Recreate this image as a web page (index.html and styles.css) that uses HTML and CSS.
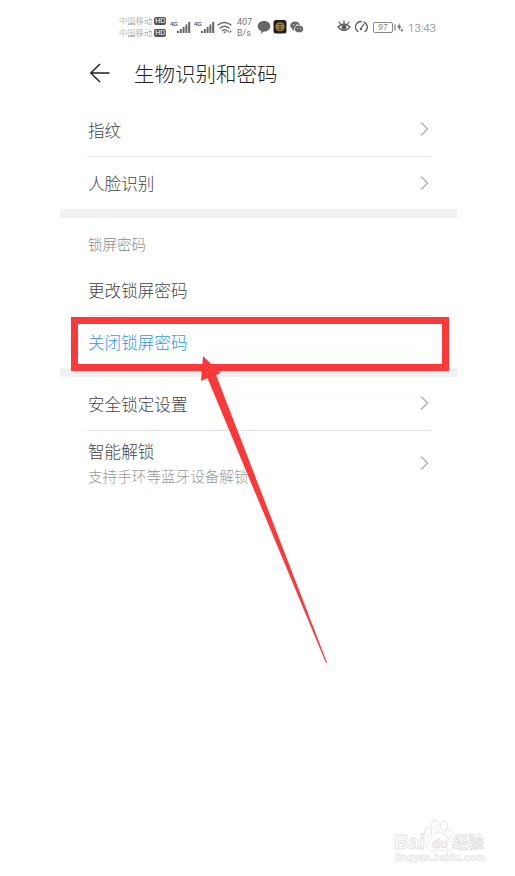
FILE: index.html
```html
<!DOCTYPE html>
<html lang="zh-CN">
<head>
<meta charset="utf-8">
<title>生物识别和密码</title>
<link rel="stylesheet" href="styles.css">
</head>
<body>
<main class="phone">
  <div class="status">
    <div class="carriers">
      <div class="carrier"><span>中国移动</span><b>HD</b></div>
      <div class="carrier"><span>中国移动</span><b>HD</b></div>
    </div>
    <svg class="signals" width="64" height="18" viewBox="0 0 64 18">
      <g fill="#666">
        <path d="M7 15v-2h2v2zM9.800 15v-4h2v4zM12.600 15V9h2v6zM15.400 15V6.500h2V15zM18.200 15V4h2v11z"/>
        <path d="M31 15v-2h2v2zM33.800 15v-4h2v4zM36.600 15V9h2v6zM39.400 15V6.500h2V15zM42.200 15V4h2v11z"/>
      </g>
      <text x="0" y="7.500" class="net">4G</text>
      <text x="24" y="7.500" class="net">4G</text>
      <g fill="none" stroke="#666" stroke-width="1.300" stroke-linecap="round">
        <path d="M48 7q6.500-5 13 0M50 10q4.500-3.500 9 0M52.300 12.500q2.200-1.700 4.400 0"/>
      </g>
      <circle cx="54.500" cy="14.300" r="1" fill="#666"/>
      <path d="M57 13.500l1.700-1.500v3zM61.700 13.500L60 12v3z" fill="#666"/>
    </svg>
    <div class="speed"><span>407</span><span>B/s</span></div>
    <svg class="apps" width="47" height="16" viewBox="0 0 47 16">
      <path d="M7 2c3.800 0 6.300 2.200 6.300 5.200S10.500 12.500 7 12.500L4 14.500l.3-2.600C2 11 .7 9.400 .7 7.200.7 4.200 3.300 2 7 2z" fill="#666"/>
      <rect x="16.500" y="1" width="13" height="13.500" rx="2.500" fill="#251f1b"/>
      <circle cx="23" cy="7.700" r="4.500" fill="#b18a48"/>
      <path d="M20 5.500h6M20 8h6M20.500 10.300h5M23 4v8" stroke="#33271a" fill="none" stroke-width=".6"/>
      <path d="M38 2.500c3 0 5 1.700 5 4s-2 4-5 4l-2.700 1.200.3-1.900C34 9 33.300 8 33.300 6.500c0-2.300 2-4 4.700-4z" fill="#666"/>
      <ellipse cx="42" cy="10" rx="4.500" ry="3.700" fill="#666" stroke="#fff" stroke-width=".7"/>
      <g fill="#fff"><circle cx="36.600" cy="5.500" r=".6"/><circle cx="40" cy="5.500" r=".6"/><circle cx="40.700" cy="9.500" r=".5"/><circle cx="43.500" cy="9.500" r=".5"/></g>
    </svg>
    <svg class="modes" width="33" height="14" viewBox="0 0 33 14">
      <g fill="none" stroke="#5c5c5c" stroke-width="1.200" stroke-linecap="round">
        <path d="M1 7q6-6 12 0q-6 7-12 0zM7 3V1M3.500 4L2 2M10.500 4L12 2"/>
        <path d="M21 11.500C16.500 8.500 18.500 1.500 24.500 1.500M27 2c4 2 4.500 7 1 9.500M23.500 9l3.500-5" stroke-width="1.300"/>
      </g>
      <circle cx="7" cy="7.200" r="2.500" fill="#5c5c5c"/>
      <circle cx="24" cy="9" r="1.200" fill="#5c5c5c"/>
    </svg>
    <div class="battery">97</div>
    <svg class="charge" width="10" height="11" viewBox="0 0 10 11">
      <path d="M1 2.500v6" stroke="#777" stroke-width="1.200"/>
      <path d="M5.500 1L3.200 5.500h2L4.500 9l2.800-4.500H5.500zM7.500 6.500L6.500 8.500h1.200L7.500 10.500l2-2.800H8z" fill="#555"/>
    </svg>
    <div class="time">13:43</div>
  </div>

  <header class="title-bar">
    <svg width="20" height="20" viewBox="0 0 20 20"><path d="M10 1L.8 10L10 19M.8 10H19.500" fill="none" stroke="#222" stroke-width="1.500"/></svg>
    <h1>生物识别和密码</h1>
  </header>

  <section class="group">
    <div class="row lined"><span>指纹</span><svg class="chevron" viewBox="0 0 9 16"><path d="M1 1.500L7.600 8L1 14.500"/></svg></div>
    <div class="row"><span>人脸识别</span><svg class="chevron" viewBox="0 0 9 16"><path d="M1 1.500L7.600 8L1 14.500"/></svg></div>
  </section>

  <section class="group">
    <h2>锁屏密码</h2>
    <div class="row lined change"><span>更改锁屏密码</span></div>
    <div class="row disable"><span>关闭锁屏密码</span></div>
  </section>

  <section class="group last">
    <div class="row lined"><span>安全锁定设置</span><svg class="chevron" viewBox="0 0 9 16"><path d="M1 1.500L7.600 8L1 14.500"/></svg></div>
    <div class="row smart"><div><span>智能解锁</span><small>支持手环等蓝牙设备解锁</small></div><svg class="chevron" viewBox="0 0 9 16"><path d="M1 1.500L7.600 8L1 14.500"/></svg></div>
  </section>
</main>

<div class="highlight"></div>
<svg class="pointer" width="130" height="310" viewBox="0 0 130 310"><path d="M4 1L21.500 18L17 20L128 307.500L127 308L8.500 23L2 26z" fill="#fc3939"/></svg>

<svg class="watermark" width="100" height="50" viewBox="0 0 100 50">
  <g class="outline">
    <text x="3" y="33" class="brand" textLength="31" lengthAdjust="spacingAndGlyphs">Bai</text>
    <ellipse cx="37" cy="16" rx="3.500" ry="4.500"/>
    <ellipse cx="44" cy="9" rx="3.700" ry="4.800"/>
    <ellipse cx="53" cy="9.500" rx="3.700" ry="4.800"/>
    <ellipse cx="57.500" cy="17.500" rx="3.500" ry="4.500"/>
    <path d="M48 16c-4 0-5 4-9 8-5 4-4 10 1 11 4 0 5-1 8-1s5 1 9 1c6-1 6-7 1-11-4-4-5-8-10-8z"/>
    <text x="41" y="31.500" class="du">du</text>
    <text x="62" y="31.500" class="jingyan">经验</text>
    <text x="4" y="45" class="site" textLength="90" lengthAdjust="spacingAndGlyphs">jingyan.baidu.com</text>
  </g>
</svg>
</body>
</html>
```
FILE: styles.css
```css
* {
  box-sizing: border-box;
}

body {
  margin: 0;
  width: 515px;
  height: 876px;
  overflow: hidden;
  position: relative;
  background: #fff;
  color: #444;
  font-family: "Liberation Sans", "Noto Sans CJK SC", sans-serif;
}

.phone {
  width: 397px;
  margin-left: 60px;
}

.status {
  display: flex;
  align-items: center;
  height: 44px;
  padding: 11px 0 1px 59px;
}

.carriers {
  width: 50px;
}

.carrier {
  display: flex;
  align-items: center;
  height: 12.5px;
  font-size: 8.3px;
  line-height: 12px;
  font-weight: 300;
  color: #888;
  white-space: nowrap;
}

.carrier b {
  width: 12px;
  height: 8px;
  margin-left: 2px;
  border-radius: 2px;
  background: #555;
  color: #fff;
  font-size: 7px;
  line-height: 8px;
  text-align: center;
}

.signals {
  margin: 0 3px 0 1px;
}

.net {
  font: bold 6px "Liberation Sans", sans-serif;
  fill: #555;
}

.speed {
  display: flex;
  flex-direction: column;
  width: 20px;
  padding-top: 1px;
  font: 9px/10.5px Roboto, sans-serif;
  color: #777;
}

.modes {
  margin-left: 33px;
}

.battery {
  width: 20px;
  height: 11px;
  margin-left: 3px;
  border: 1px solid #888;
  border-radius: 2px;
  font: 8.5px/9px "Liberation Sans", sans-serif;
  color: #888;
  text-align: center;
}

.charge {
  margin-left: 1px;
}

.time {
  margin: 1px 0 0 4px;
  font: 300 11.5px/14px Roboto, sans-serif;
  color: #777;
}

.title-bar {
  display: flex;
  align-items: center;
  height: 59px;
  padding: 0 0 2px 30px;
}

.title-bar h1 {
  margin: 4px 0 0 24px;
  font-size: 20.5px;
  line-height: 28px;
  font-weight: 300;
  color: #222;
}

.group {
  padding: 0 26px 0 27px;
  border-bottom: 9px solid #f1f1f1;
}

.group.last {
  border: 0;
}

.row {
  display: flex;
  align-items: center;
  justify-content: space-between;
  height: 53px;
  padding: 4px 2px 0 1px;
  font-size: 16.6px;
  line-height: 24px;
  font-weight: 300;
}

.lined {
  height: 54px;
  border-bottom: 1px solid #e2e2e2;
}

.chevron {
  width: 9px;
  height: 16px;
  margin-top: -5px;
  fill: none;
  stroke: #b5b5b5;
  stroke-width: 1.6;
}

.group:first-of-type .row:last-child {
  height: 52px;
}

.group h2 {
  height: 46px;
  margin: 0;
  padding: 4px 0 0 1px;
  font-size: 14.5px;
  line-height: 46px;
  font-weight: 300;
  color: #888;
}

.change {
  height: 52px;
}

.disable {
  height: 52px;
  color: #3295f5;
}

.smart {
  height: 66px;
  padding-top: 2px;
}

.smart span,
.smart small {
  display: block;
}

.smart small {
  font-size: 14.6px;
  line-height: 24px;
  color: #999;
}

.highlight {
  position: absolute;
  left: 71px;
  top: 317px;
  width: 378px;
  height: 54px;
  border: 7px solid #fc3939;
}

.pointer {
  position: absolute;
  left: 199px;
  top: 355px;
}

.watermark {
  position: absolute;
  left: 391px;
  top: 816px;
}

.outline {
  fill: #fff;
  stroke: #e0e0e0;
  stroke-width: 0.8;
}

.brand {
  font: bold 20px "Liberation Sans", sans-serif;
}

.du {
  font: bold 13px "Liberation Sans", sans-serif;
}

.jingyan {
  font: bold 15.5px "Noto Sans CJK SC", sans-serif;
}

.site {
  font: bold 10px "Liberation Sans", sans-serif;
  stroke-width: 0.5;
}
```
